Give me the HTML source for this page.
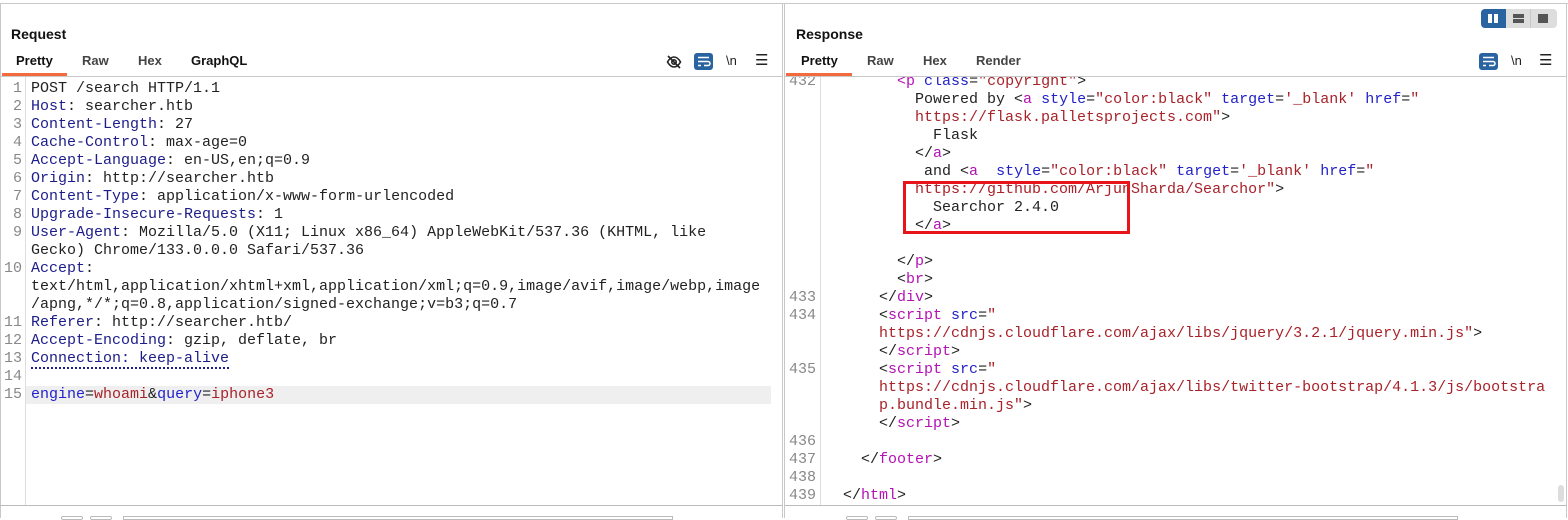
<!DOCTYPE html>
<html><head><meta charset="utf-8"><style>
*{margin:0;padding:0;box-sizing:border-box}
body{width:1568px;height:518px;overflow:hidden;background:#fff;font-family:"Liberation Sans",sans-serif;position:relative}
.a{position:absolute}
.h{font-weight:bold;font-size:14px;color:#111}
.t{font-weight:bold;font-size:13px;color:#444}
.t.s{color:#111}
pre{font-family:"Liberation Mono",monospace;font-size:15px;line-height:18px;color:#222;position:absolute;white-space:pre}
.n{color:#888;text-align:right}
.k{color:#1c1c8a}.r{color:#a8222a}.m{color:#b312b3}.b{color:#2222c8}
.ic{position:absolute;width:19px;height:17px;background:#2a64a0;border-radius:3px}
</style></head><body>
<div class="a" style="left:0;top:3px;width:1568px;height:1px;background:#c8c8c8"></div>
<div class="a" style="left:0;top:3px;width:1px;height:515px;background:#c8c8c8"></div>
<div class="a" style="left:782px;top:3px;width:1px;height:515px;background:#c8c8c8"></div>
<div class="a" style="left:784px;top:3px;width:1px;height:515px;background:#c8c8c8"></div>
<div class="a" style="left:1566px;top:3px;width:1px;height:515px;background:#c8c8c8"></div>

<div class="a h" style="left:11px;top:26px">Request</div>
<div class="a t s" style="left:16px;top:53px">Pretty</div>
<div class="a t" style="left:82px;top:53px">Raw</div>
<div class="a t" style="left:138px;top:53px">Hex</div>
<div class="a t s" style="left:191px;top:53px">GraphQL</div>
<div class="a" style="left:2px;top:73px;width:65px;height:3px;background:#f26a3d"></div>
<div class="a" style="left:0;top:76px;width:782px;height:1px;background:#c8c8c8"></div>
<svg class="a" style="left:666px;top:54px" width="16" height="16" viewBox="0 0 16 16" fill="none" stroke="#222" stroke-width="1.6"><path d="M1.5 8c2-3.5 4.2-5 6.5-5s4.5 1.5 6.5 5c-2 3.5-4.2 5-6.5 5s-4.5-1.5-6.5-5z"/><circle cx="8" cy="8" r="2.2"/><path d="M2 2l12 12"/></svg>
<div class="ic" style="left:694px;top:53px"></div>
<svg class="a" style="left:694px;top:53px" width="19" height="17" viewBox="0 0 19 17" fill="none" stroke="#fff" stroke-width="1.5"><path d="M4 4.5h11M4 8.5h10a2 2 0 0 1 0 4h-4M4 12.5h3"/></svg>
<div class="a" style="left:726px;top:53px;font-size:13px;color:#222">\n</div>
<div class="a" style="left:755px;top:51px;font-size:15px;color:#222">☰</div>

<div class="a" style="left:25px;top:77px;width:1px;height:428px;background:#ddd"></div>
<div class="a" style="left:26px;top:386px;width:745px;height:18px;background:#efefef"></div>
<pre class="n" style="left:0;top:80px;width:22px">1
2
3
4
5
6
7
8
9

10


11
12
13
14
15</pre>
<pre style="left:31px;top:80px">POST /search HTTP/1.1
<span class="k">Host</span>: searcher.htb
<span class="k">Content-Length</span>: 27
<span class="k">Cache-Control</span>: max-age=0
<span class="k">Accept-Language</span>: en-US,en;q=0.9
<span class="k">Origin</span>: http://searcher.htb
<span class="k">Content-Type</span>: application/x-www-form-urlencoded
<span class="k">Upgrade-Insecure-Requests</span>: 1
<span class="k">User-Agent</span>: Mozilla/5.0 (X11; Linux x86_64) AppleWebKit/537.36 (KHTML, like
Gecko) Chrome/133.0.0.0 Safari/537.36
<span class="k">Accept</span>:
text/html,application/xhtml+xml,application/xml;q=0.9,image/avif,image/webp,image
/apng,*/*;q=0.8,application/signed-exchange;v=b3;q=0.7
<span class="k">Referer</span>: http://searcher.htb/
<span class="k">Accept-Encoding</span>: gzip, deflate, br
<span class="k" style="border-bottom:2px dotted #1c1c8a">Connection: keep-alive</span>

<span class="b">engine</span>=<span class="r">whoami</span>&amp;<span class="b">query</span>=<span class="r">iphone3</span></pre>
<div class="a" style="left:0;top:505px;width:782px;height:1px;background:#bbb"></div>
<div class="a" style="left:61px;top:516px;width:22px;height:4px;border:1px solid #bbb;border-radius:3px"></div>
<div class="a" style="left:90px;top:516px;width:22px;height:4px;border:1px solid #bbb;border-radius:3px"></div>
<div class="a" style="left:123px;top:516px;width:550px;height:4px;border:1px solid #bbb"></div>

<div class="a" style="left:1481px;top:9px;width:76px;height:19px;background:#ddd;border-radius:4px"></div>
<div class="a" style="left:1481px;top:9px;width:25px;height:19px;background:#2a64a0;border-radius:4px 0 0 4px"></div>
<div class="a" style="left:1488px;top:14px;width:4px;height:9px;background:#fff"></div>
<div class="a" style="left:1494px;top:14px;width:4px;height:9px;background:#fff"></div>
<div class="a" style="left:1513px;top:14px;width:11px;height:4px;background:#555"></div>
<div class="a" style="left:1513px;top:19px;width:11px;height:4px;background:#555"></div>
<div class="a" style="left:1530px;top:9px;width:1px;height:19px;background:#c8c8c8"></div>
<div class="a" style="left:1538px;top:14px;width:10px;height:9px;background:#555"></div>

<div class="a h" style="left:796px;top:26px">Response</div>
<div class="a t s" style="left:801px;top:53px">Pretty</div>
<div class="a t" style="left:867px;top:53px">Raw</div>
<div class="a t" style="left:923px;top:53px">Hex</div>
<div class="a t" style="left:976px;top:53px">Render</div>
<div class="a" style="left:786px;top:73px;width:66px;height:3px;background:#f26a3d"></div>
<div class="a" style="left:785px;top:76px;width:781px;height:1px;background:#c8c8c8"></div>
<div class="ic" style="left:1479px;top:53px"></div>
<svg class="a" style="left:1479px;top:53px" width="19" height="17" viewBox="0 0 19 17" fill="none" stroke="#fff" stroke-width="1.5"><path d="M4 4.5h11M4 8.5h10a2 2 0 0 1 0 4h-4M4 12.5h3"/></svg>
<div class="a" style="left:1511px;top:53px;font-size:13px;color:#222">\n</div>
<div class="a" style="left:1539px;top:51px;font-size:15px;color:#222">☰</div>

<div class="a" style="left:820px;top:77px;width:1px;height:428px;background:#ddd"></div>
<div class="a" style="left:785px;top:77px;width:780px;height:428px;overflow:hidden">
<pre class="n" style="left:0;top:-4px;width:31px">432











433
434


435



436
437
438
439</pre>
<pre style="left:40px;top:-4px">        <span class="m">&lt;p</span> <span class="b">class</span>=<span class="r">"copyright"</span>&gt;
          Powered by &lt;<span class="m">a</span> <span class="b">style</span>=<span class="r">"color:black"</span> <span class="b">target</span>=<span class="r">'_blank'</span> <span class="b">href</span>=<span class="r">"</span>
<span class="r">          https://flask.palletsprojects.com</span><span class="r">"</span>&gt;
            Flask
          &lt;/<span class="m">a</span>&gt;
           and &lt;<span class="m">a</span>  <span class="b">style</span>=<span class="r">"color:black"</span> <span class="b">target</span>=<span class="r">'_blank'</span> <span class="b">href</span>=<span class="r">"</span>
<span class="r">          https://github.com/ArjunSharda/Searchor"</span>&gt;
            Searchor 2.4.0
          &lt;/<span class="m">a</span>&gt;

        &lt;/<span class="m">p</span>&gt;
        &lt;<span class="m">br</span>&gt;
      &lt;/<span class="m">div</span>&gt;
      &lt;<span class="m">script</span> <span class="b">src</span>=<span class="r">"</span>
<span class="r">      https://cdnjs.cloudflare.com/ajax/libs/jquery/3.2.1/jquery.min.js"</span>&gt;
      &lt;/<span class="m">script</span>&gt;
      &lt;<span class="m">script</span> <span class="b">src</span>=<span class="r">"</span>
<span class="r">      https://cdnjs.cloudflare.com/ajax/libs/twitter-bootstrap/4.1.3/js/bootstra</span>
<span class="r">      p.bundle.min.js"</span>&gt;
      &lt;/<span class="m">script</span>&gt;

    &lt;/<span class="m">footer</span>&gt;

  &lt;/<span class="m">html</span>&gt;</pre>
</div>
<div class="a" style="left:903px;top:181px;width:227px;height:53px;border:3px solid #e8141a"></div>
<div class="a" style="left:1558px;top:485px;width:6px;height:17px;background:#ddd;border-radius:3px"></div>
<div class="a" style="left:785px;top:505px;width:781px;height:1px;background:#bbb"></div>
<div class="a" style="left:846px;top:516px;width:22px;height:4px;border:1px solid #bbb;border-radius:3px"></div>
<div class="a" style="left:875px;top:516px;width:22px;height:4px;border:1px solid #bbb;border-radius:3px"></div>
<div class="a" style="left:908px;top:516px;width:550px;height:4px;border:1px solid #bbb"></div>
</body></html>
